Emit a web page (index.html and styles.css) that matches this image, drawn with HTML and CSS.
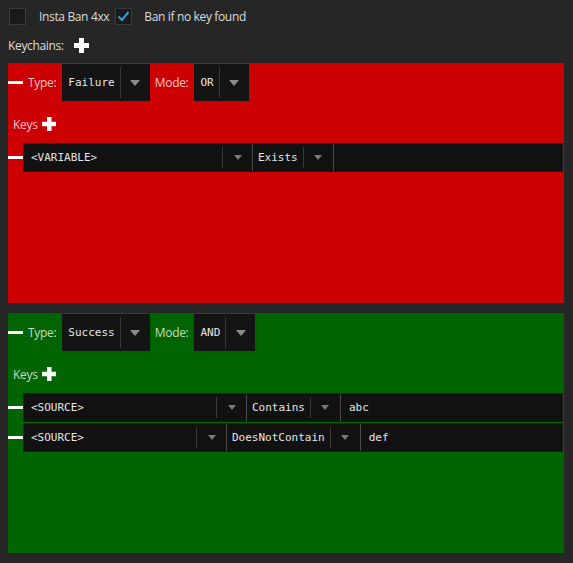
FILE: index.html
```html
<!DOCTYPE html>
<html>
<head>
<meta charset="utf-8">
<link rel="stylesheet" href="styles.css">
</head>
<body>
<div class="app">
  <div class="topbar">
    <span class="cb"></span><span class="lbl first">Insta Ban 4xx</span>
    <span class="cb"><svg width="17" height="17" viewBox="0 0 17 17"><polyline points="3.5,8.5 7,12 13.5,4" fill="none" stroke="#2aa3dc" stroke-width="2"/></svg></span><span class="lbl second">Ban if no key found</span>
  </div>
  <div class="chains">
    <span class="lbl">Keychains:</span>
    <svg class="plus big" width="15" height="15" viewBox="0 0 15 15"><rect x="5" y="0" width="5" height="15" fill="#fff"/><rect x="0" y="5" width="15" height="5" fill="#fff"/></svg>
  </div>

  <div class="panel red">
    <div class="typerow">
      <span class="minus"></span>
      <span class="plbl">Type:</span>
      <div class="combo"><span class="ctext">Failure</span><span class="cdiv"></span><span class="carrow"><i class="tri"></i></span></div>
      <span class="plbl">Mode:</span>
      <div class="combo"><span class="ctext">OR</span><span class="cdiv"></span><span class="carrow"><i class="tri"></i></span></div>
    </div>
    <div class="keyshead">
      <span class="plbl">Keys</span>
      <svg class="plus" width="14" height="14" viewBox="0 0 14 14"><rect x="5" y="0" width="4.5" height="14" fill="#fff"/><rect x="0" y="4.75" width="14" height="4.5" fill="#fff"/></svg>
    </div>
    <div class="keys">
      <div class="keyrow">
        <span class="minus"></span>
        <div class="keybox">
          <div class="kcombo"><span class="ktext w198">&lt;VARIABLE&gt;</span><span class="cdiv"></span><span class="karrow"><i class="tri small"></i></span></div>
          <div class="kcombo sep"><span class="ktext">Exists</span><span class="cdiv"></span><span class="karrow"><i class="tri small"></i></span></div>
          <div class="kfield sep"></div>
        </div>
      </div>
    </div>
  </div>

  <div class="panel green">
    <div class="typerow">
      <span class="minus"></span>
      <span class="plbl">Type:</span>
      <div class="combo"><span class="ctext">Success</span><span class="cdiv"></span><span class="carrow"><i class="tri"></i></span></div>
      <span class="plbl">Mode:</span>
      <div class="combo"><span class="ctext">AND</span><span class="cdiv"></span><span class="carrow"><i class="tri"></i></span></div>
    </div>
    <div class="keyshead">
      <span class="plbl">Keys</span>
      <svg class="plus" width="14" height="14" viewBox="0 0 14 14"><rect x="5" y="0" width="4.5" height="14" fill="#fff"/><rect x="0" y="4.75" width="14" height="4.5" fill="#fff"/></svg>
    </div>
    <div class="keys">
      <div class="keyrow">
        <span class="minus"></span>
        <div class="keybox">
          <div class="kcombo"><span class="ktext w192">&lt;SOURCE&gt;</span><span class="cdiv"></span><span class="karrow"><i class="tri small"></i></span></div>
          <div class="kcombo sep"><span class="ktext">Contains</span><span class="cdiv"></span><span class="karrow"><i class="tri small"></i></span></div>
          <div class="kfield sep">abc</div>
        </div>
      </div>
      <div class="keyrow">
        <span class="minus"></span>
        <div class="keybox">
          <div class="kcombo"><span class="ktext w172">&lt;SOURCE&gt;</span><span class="cdiv"></span><span class="karrow"><i class="tri small"></i></span></div>
          <div class="kcombo sep"><span class="ktext">DoesNotContain</span><span class="cdiv"></span><span class="karrow"><i class="tri small"></i></span></div>
          <div class="kfield sep">def</div>
        </div>
      </div>
    </div>
  </div>
</div>
</body>
</html>
```

FILE: styles.css
```css
html, body {
  margin: 0;
  padding: 0;
  background: #262626;
  width: 573px;
  height: 563px;
  overflow: hidden;
}
.app {
  width: 573px;
  height: 563px;
  font-family: "Open Sans", "Noto Sans", sans-serif;
  font-size: 12px;
  color: #dcdcdc;
}
.topbar {
  display: flex;
  align-items: center;
  height: 17px;
  padding: 8px 0 0 9px;
}
.cb {
  width: 17px;
  height: 17px;
  box-sizing: border-box;
  background: #1a1a1a;
  border: 1px solid #3a3a3a;
  display: flex;
  align-items: center;
  justify-content: center;
}
.cb svg { display: block; margin: -1px; }
.lbl { white-space: nowrap; line-height: 17px; }
.lbl.first { margin: 0 6px 0 13px; letter-spacing: -0.35px; }
.lbl.second { margin-left: 12px; letter-spacing: -0.35px; }
.chains {
  display: flex;
  align-items: center;
  height: 16px;
  margin-top: 12px;
  padding-left: 8px;
}
.chains .lbl { letter-spacing: -0.35px; }
.plus { display: block; flex: none; }
.plus.big { margin-left: 10px; }

.panel {
  margin-left: 8px;
  width: 556px;
  height: 240px;
  box-sizing: border-box;
  margin-top: 10px;
}
.red { background: #cc0000; }
.green { background: #006400; }

.typerow {
  display: flex;
  align-items: center;
  padding-top: 1px;
  height: 37px;
}
.minus {
  flex: none;
  width: 15px;
  height: 3px;
  background: #fff;
}
.plbl {
  color: rgba(255, 255, 255, 0.78);
  margin: 0 6px 0 5px;
  white-space: nowrap;
  letter-spacing: -0.3px;
}
.combo {
  display: flex;
  align-items: stretch;
  height: 37px;
  background: #141414;
}
.ctext, .ktext {
  font-family: "DejaVu Sans Mono", "Liberation Mono", monospace;
  font-size: 11px;
  color: #e6e6e6;
  display: flex;
  align-items: center;
  padding: 0 5px 0 6px;
  white-space: nowrap;
}
.ctext { padding-bottom: 1px; }
.cdiv {
  width: 1px;
  background: #383838;
  margin: 3px 0;
}
.carrow, .karrow {
  width: 29px;
  display: flex;
  align-items: center;
  justify-content: center;
}
.tri {
  display: block;
  width: 0;
  height: 0;
  border-left: 5px solid transparent;
  border-right: 5px solid transparent;
  border-top: 6px solid #8c8c8c;
}
.tri.small {
  border-left-width: 4.5px;
  border-right-width: 4.5px;
  border-top-width: 5px;
  border-top-color: #7a7a7a;
}
.keyshead {
  display: flex;
  align-items: center;
  height: 14px;
  margin-top: 16px;
}
.keyshead .plbl { margin: 0 4px 0 5px; }
.keys {
  margin-top: 12px;
  display: flex;
  flex-direction: column;
  gap: 1px;
}
.keyrow {
  display: flex;
  align-items: center;
  height: 29px;
}
.keybox {
  flex: none;
  width: 540px;
  height: 29px;
  box-sizing: border-box;
  border: 1px solid rgba(40, 40, 40, 0.55);
  background: #111;
  display: flex;
}
.kcombo {
  display: flex;
  align-items: stretch;
}
.ktext { padding: 0 5px 0 7px; box-sizing: border-box; }
.kcombo.sep .ktext { padding-left: 5px; }
.w198 { width: 198px; }
.w192 { width: 192px; }
.w172 { width: 172px; }
.sep { border-left: 1px solid #4a4a4a; }
.kfield {
  flex: 1;
  display: flex;
  align-items: center;
  padding-left: 8px;
  font-family: "DejaVu Sans Mono", "Liberation Mono", monospace;
  font-size: 11px;
  color: #e6e6e6;
}
```
